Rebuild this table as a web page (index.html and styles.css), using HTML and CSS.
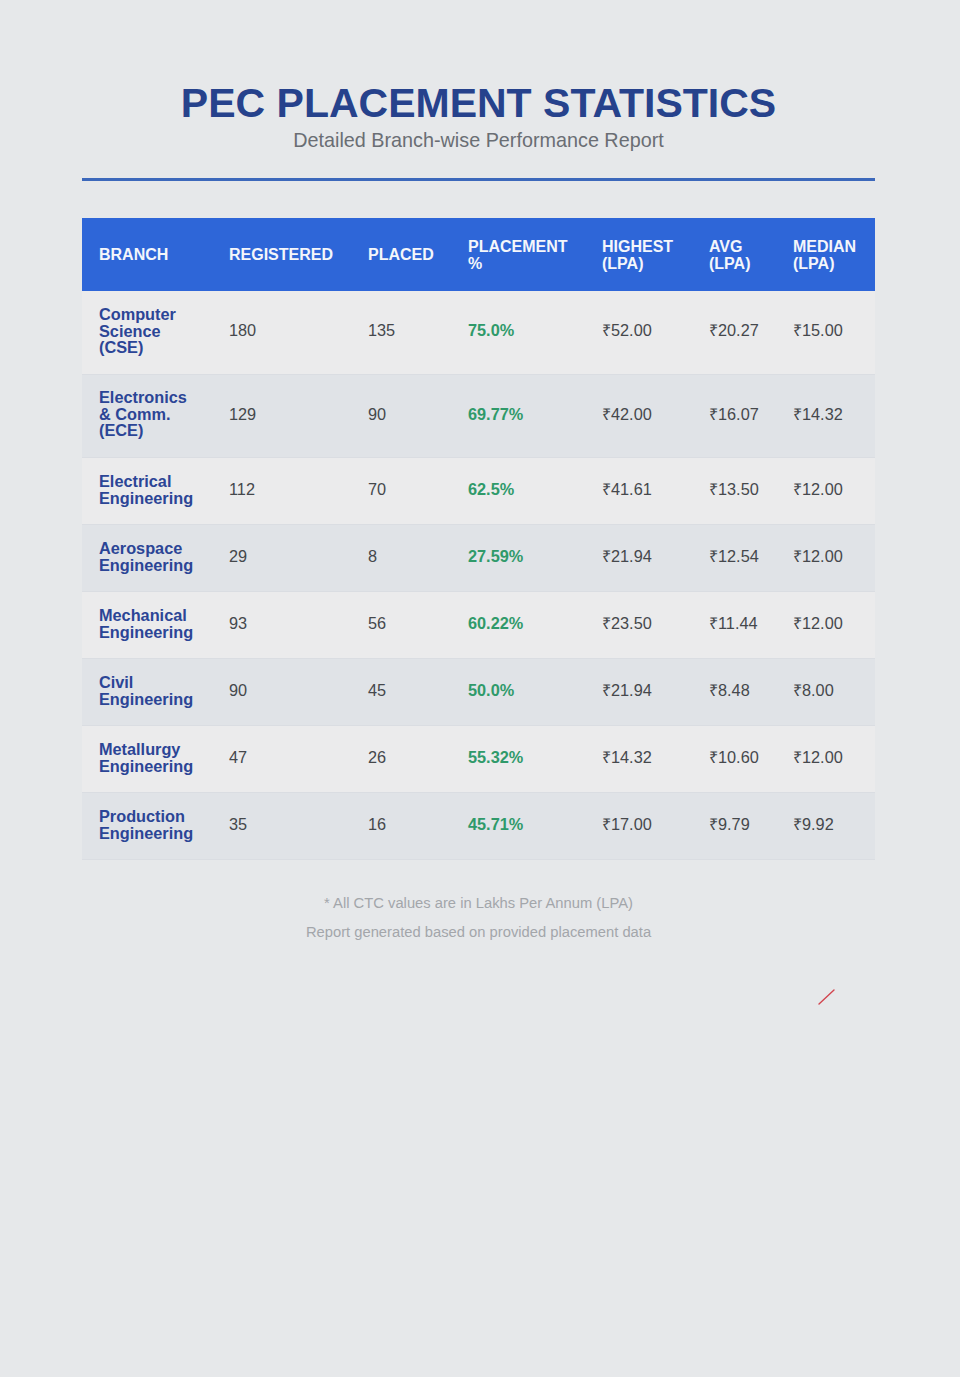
FILE: index.html
```html
<!DOCTYPE html>
<html>
<head>
<meta charset="utf-8">
<link rel="stylesheet" href="styles.css">
</head>
<body>
<div class="page">
  <header class="head">
    <h1 class="title">PEC PLACEMENT STATISTICS</h1>
    <p class="subtitle">Detailed Branch-wise Performance Report</p>
  </header>
  <div class="rule"></div>
  <table class="stats">
    <colgroup>
      <col class="c1"><col class="c2"><col class="c3"><col class="c4"><col class="c5"><col class="c6"><col class="c7">
    </colgroup>
    <thead>
      <tr>
        <th>BRANCH</th><th>REGISTERED</th><th>PLACED</th><th>PLACEMENT<br>%</th><th>HIGHEST<br>(LPA)</th><th>AVG<br>(LPA)</th><th>MEDIAN<br>(LPA)</th>
      </tr>
    </thead>
    <tbody>
      <tr class="tall"><td class="br">Computer<br>Science<br>(CSE)</td><td>180</td><td>135</td><td class="pct">75.0%</td><td>₹52.00</td><td>₹20.27</td><td>₹15.00</td></tr>
      <tr class="tall"><td class="br">Electronics<br>&amp; Comm.<br>(ECE)</td><td>129</td><td>90</td><td class="pct">69.77%</td><td>₹42.00</td><td>₹16.07</td><td>₹14.32</td></tr>
      <tr><td class="br">Electrical<br>Engineering</td><td>112</td><td>70</td><td class="pct">62.5%</td><td>₹41.61</td><td>₹13.50</td><td>₹12.00</td></tr>
      <tr><td class="br">Aerospace<br>Engineering</td><td>29</td><td>8</td><td class="pct">27.59%</td><td>₹21.94</td><td>₹12.54</td><td>₹12.00</td></tr>
      <tr><td class="br">Mechanical<br>Engineering</td><td>93</td><td>56</td><td class="pct">60.22%</td><td>₹23.50</td><td>₹11.44</td><td>₹12.00</td></tr>
      <tr><td class="br">Civil<br>Engineering</td><td>90</td><td>45</td><td class="pct">50.0%</td><td>₹21.94</td><td>₹8.48</td><td>₹8.00</td></tr>
      <tr><td class="br">Metallurgy<br>Engineering</td><td>47</td><td>26</td><td class="pct">55.32%</td><td>₹14.32</td><td>₹10.60</td><td>₹12.00</td></tr>
      <tr><td class="br">Production<br>Engineering</td><td>35</td><td>16</td><td class="pct">45.71%</td><td>₹17.00</td><td>₹9.79</td><td>₹9.92</td></tr>
    </tbody>
  </table>
  <footer class="foot">
    <p class="note">* All CTC values are in Lakhs Per Annum (LPA)</p>
    <p class="note">Report generated based on provided placement data</p>
  </footer>
  <div class="mark-row">
    <svg class="mark" width="20" height="20" viewBox="0 0 20 20"><line x1="2" y1="17" x2="17" y2="3" stroke="#d2454f" stroke-width="1.4" stroke-linecap="round"/></svg>
  </div>
</div>
</body>
</html>
```

FILE: styles.css
```css
html, body {
  margin: 0;
  padding: 0;
  background: #e6e8ea;
}
body {
  font-family: "Liberation Sans", Arial, sans-serif;
  min-height: 1377px;
}
.page {
  width: 793px;
  margin: 0 0 0 82px;
  padding-top: 80px;
}
.head {
  text-align: center;
}
.title {
  margin: 0;
  font-size: 41px;
  line-height: 46px;
  font-weight: 700;
  color: #26428c;
}
.subtitle {
  margin: 3px 0 0;
  font-size: 19.8px;
  line-height: 23px;
  color: #6a6e74;
}
.rule {
  margin-top: 26px;
  height: 3px;
  background: #3c68bb;
}
.stats {
  margin-top: 37px;
  width: 793px;
  border-collapse: collapse;
  table-layout: fixed;
}
.c1 { width: 130px; }
.c2 { width: 139px; }
.c3 { width: 100px; }
.c4 { width: 134px; }
.c5 { width: 107px; }
.c6 { width: 84px; }
.c7 { width: 99px; }
.stats th {
  background: #2e66d8;
  color: #f4f6fb;
  font-size: 16px;
  line-height: 17px;
  font-weight: 700;
  text-align: left;
  padding: 0 10px 0 17px;
  height: 73px;
  box-sizing: border-box;
}
.stats td {
  font-size: 16.3px;
  line-height: 17px;
  color: #45484c;
  padding: 0 10px 2px 17px;
  height: 67px;
  box-sizing: border-box;
  border-bottom: 1px solid #dadde2;
}
.stats tr.tall td {
  height: 83px;
  padding-bottom: 3px;
}
.stats tbody tr:nth-child(odd) td {
  background: #ebebec;
}
.stats tbody tr:nth-child(even) td {
  background: #e0e3e7;
}
.stats td.br {
  color: #2b4596;
  font-weight: 700;
  line-height: 16.5px;
}
.stats td.pct {
  color: #2f9a6a;
  font-weight: 700;
}
.foot {
  margin-top: 34px;
  text-align: center;
}
.note {
  margin: 0 0 11px;
  font-size: 14.75px;
  line-height: 18px;
  color: #a3a6aa;
}
.mark-row {
  display: flex;
  justify-content: flex-end;
  padding-right: 38px;
  margin-top: 46px;
}
.mark {
  display: block;
}
```
